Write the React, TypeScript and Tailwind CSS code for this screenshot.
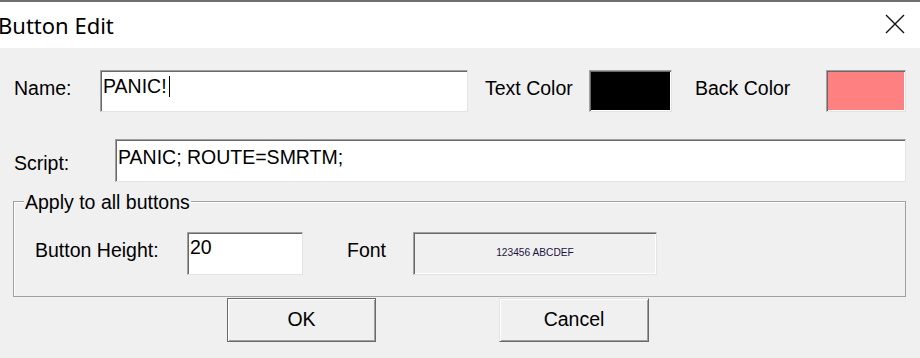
import React from "react";

const sunken =
  "shrink-0 border border-t-[#a0a0a0] border-l-[#a0a0a0] border-b-[#e3e3e3] border-r-[#e3e3e3] shadow-[inset_1px_1px_0_#696969,inset_-1px_-1px_0_#ffffff]";

export default function App() {
  return (
    <div className="w-[920px] h-[358px] overflow-hidden bg-[#f0f0f0] text-black text-[19.5px] leading-none whitespace-nowrap [font-family:'Liberation_Sans',Arial,sans-serif]">
      {/* window title bar */}
      <div className="h-[2px] bg-[#6e6e6e]" />
      <div className="h-[46px] bg-white flex items-start justify-between">
        <div className="mt-[12px] -ml-[2px] text-[22px] leading-none [font-family:'Noto_Sans',sans-serif]">Button Edit</div>
        <svg className="mt-[12px] mr-[15px] shrink-0" width="20" height="20" viewBox="0 0 20 20">
          <path d="M1 1 L19 19 M19 1 L1 19" stroke="#111" strokeWidth="1.4" fill="none" />
        </svg>
      </div>

      {/* name / colors */}
      <div className="mt-[22px] flex items-start">
        <div className="shrink-0 w-[100px] pl-[14px] mt-[9px]">Name:</div>
        <div className={`w-[368px] h-[42px] bg-white pl-[2px] pt-[6px] flex items-start ${sunken}`}>
          <span>PANIC!</span>
          <span className="ml-[2px] -mt-[1px] w-px h-[21px] bg-black" />
        </div>
        <div className="shrink-0 w-[121px] pl-[17px] mt-[9px]">Text Color</div>
        <div className={`w-[83px] h-[42px] bg-black ${sunken}`} />
        <div className="shrink-0 w-[154px] pl-[23px] mt-[9px]">Back Color</div>
        <div className={`w-[80px] h-[42px] bg-[#ff8080] ${sunken}`} />
      </div>

      {/* script */}
      <div className="mt-[27px] flex items-start">
        <div className="shrink-0 w-[115px] pl-[14px] mt-[15px]">Script:</div>
        <div className={`w-[791px] h-[43px] bg-white pl-[2px] pt-[8px] ${sunken}`}>PANIC; ROUTE=SMRTM;</div>
      </div>

      {/* group box */}
      <div className="relative mt-[19px] ml-[13px] w-[893px] h-[96px] border border-[#a0a0a0] shadow-[inset_1px_1px_0_#ffffff] pl-[21px] pt-[30px]">
        <div className="absolute left-[10px] -top-[9px] px-[1px] bg-[#f0f0f0]">Apply to all buttons</div>
        <div className="flex items-start">
          <div className="shrink-0 w-[152px] mt-[9px]">Button Height:</div>
          <div className={`w-[116px] h-[43px] bg-white pl-[2px] pt-[5px] ${sunken}`}>20</div>
          <div className="shrink-0 w-[110px] pl-[44px] mt-[9px]">Font</div>
          <div className={`w-[244px] h-[43px] flex items-center justify-center text-[10.2px] text-[#1c1440] ${sunken}`}>
            123456 ABCDEF
          </div>
        </div>
      </div>

      {/* buttons */}
      <div className="mt-[1px] flex">
        <div className="shrink-0 ml-[227px] w-[149px] h-[44px] border border-[#6a6a6a] shadow-[inset_1px_1px_0_#ffffff,inset_-1px_-1px_0_#a0a0a0] flex items-center justify-center">
          OK
        </div>
        <div className="shrink-0 ml-[123px] w-[150px] h-[44px] border border-t-[#e3e3e3] border-l-[#e3e3e3] border-b-[#696969] border-r-[#696969] shadow-[inset_1px_1px_0_#ffffff,inset_-1px_-1px_0_#a0a0a0] flex items-center justify-center">
          Cancel
        </div>
      </div>
    </div>
  );
}
